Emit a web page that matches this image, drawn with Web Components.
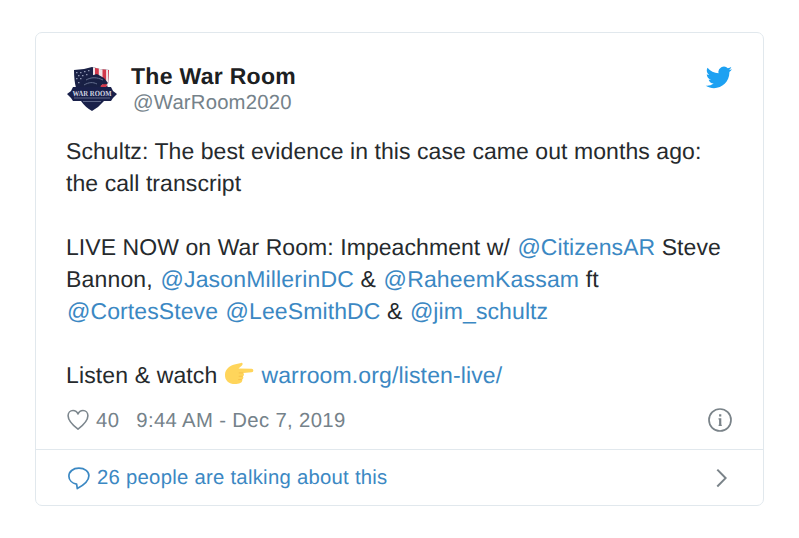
<!DOCTYPE html>
<html lang="en">
<head>
<meta charset="utf-8">
<title>The War Room on Twitter</title>
<style>
body{margin:0;background:#fff;font-family:"Liberation Sans",Arial,sans-serif;text-rendering:geometricPrecision}
</style>
</head>
<body>
<tweet-card>
  <tweet-header slot="header"><span slot="name">The War Room</span><span slot="handle">@WarRoom2020</span></tweet-header>
  <tweet-line style="letter-spacing:.07px">Schultz: The best evidence in this case came out months ago:</tweet-line>
  <tweet-line style="letter-spacing:.07px">the call transcript</tweet-line>
  <tweet-line></tweet-line>
  <tweet-line style="letter-spacing:.07px">LIVE NOW on War Room: Impeachment w/ <tweet-link>@CitizensAR</tweet-link> Steve</tweet-line>
  <tweet-line style="letter-spacing:.17px">Bannon, <tweet-link>@JasonMillerinDC</tweet-link> &amp; <tweet-link>@RaheemKassam</tweet-link> ft</tweet-line>
  <tweet-line style="letter-spacing:.1px"><tweet-link>@CortesSteve</tweet-link> <tweet-link>@LeeSmithDC</tweet-link> &amp; <tweet-link>@jim_schultz</tweet-link></tweet-line>
  <tweet-line></tweet-line>
  <tweet-line style="letter-spacing:.13px">Listen &amp; watch <tweet-icon name="point"></tweet-icon> <tweet-link>warroom.org/listen-live/</tweet-link></tweet-line>
  <tweet-meta slot="meta"><span slot="likes">40</span><span slot="date">9:44 AM - Dec 7, 2019</span></tweet-meta>
  <tweet-talk slot="footer">26 people are talking about this</tweet-talk>
</tweet-card>
<script>
const define = (name, html) => customElements.define(name, class extends HTMLElement {
  constructor() { super(); this.attachShadow({mode:'open'}).innerHTML = html; }
});

const icons = {
  bird: [28, 23, '<path fill="#1da1f2" d="M27 3.2c-1 .45-2 .7-3.1.85 1.1-.65 1.95-1.7 2.35-3-1 .6-2.15 1.05-3.4 1.3A5.4 5.4 0 0 0 13.6 7.3C9.2 7.1 5.2 5 2.5 1.7c-1.4 2.5-.7 5.6 1.7 7.2-.9 0-1.7-.25-2.45-.65 0 2.6 1.8 4.9 4.3 5.4-.8.2-1.6.25-2.4.1a5.4 5.4 0 0 0 5 3.7A10.7 10.7 0 0 1 .7 19.7C11 26.2 24.4 19 24.4 6.6v-.7c1-.75 1.9-1.7 2.6-2.7z"/>'],
  heart: [24, 24, '<path fill="none" stroke="#7c868d" stroke-width="1.6" stroke-linejoin="round" d="M12 21.2C7 17.3 2.1 13.2 2.1 7.7c0-3 2.1-5.2 4.9-5.2 2.3 0 4.1 1.3 5 3.4.9-2.1 2.7-3.4 5-3.4 2.8 0 4.9 2.2 4.9 5.2 0 5.500-4.900 9.600-9.900 13.500z"/>'],
  info: [26, 26, '<circle cx="13" cy="13" r="11" fill="none" stroke="#7a8389" stroke-width="1.7"/><path fill="#7a8389" d="M12.100 7.200h2.200v2.300h-2.200zM11.500 11.200h2.800v6.600h.5v1.200h-3.200v-1.200h.5v-5.400h-.6z"/>'],
  reply: [24, 24, '<path fill="none" stroke="#3b88c3" stroke-width="1.7" stroke-linejoin="round" d="M9.600 18.200C5 17.200 1.900 14 1.900 10.200 1.900 5.600 6 2.200 11.900 2.200s10 3.200 10 7.600c0 5.500-5.200 9.400-11.600 12.700z"/>'],
  chevron: [14, 22, '<path fill="none" stroke="#7a8389" stroke-width="2" d="M2.300 2.600l8.300 8.500-8.300 8.400"/>'],
  point: [30, 24, '<path fill="#ffd55b" d="M1 12.500C1.200 7 6 3.200 11.500 2.200L17 .9c1.700-.4 2.400 1.800.7 2.800l-3.200 2.700 13.100.3c2.200.1 2.400 3.300.1 3.500l-8.400.7c1.100 1 .8 2.700-.4 3.300.9 1.100.5 2.700-.7 3.200.5 1.500-.4 2.900-2 3.500-3.500 1.700-9.500 1.500-12.500-1.200C1.500 17.700.9 15.300 1 12.500z"/><path fill="none" stroke="#f5bd45" stroke-width=".8" d="M19 10.900h-4.200M18.500 14.300h-3.800M17.700 17.600h-3.500"/>'],
  logo: [52, 48, `<defs><clipPath id="s"><path d="M8 3q9 0 18-3 9 3 17 3l-1 14q-1 9-7 16-4 5-9 9-6-4-10-10Q8 24 8 3z"/></clipPath></defs>
   <g clip-path="url(#s)"><path fill="#1a2146" d="M0 0h52v48H0z"/><path fill="#f2e6e8" d="M27 0h20v19H27z"/><path fill="#d2394b" d="M29 0h3.800v10H29zM36.500 0h3.600v18h-3.600zM42 2h3v20h-3z"/>
   <path fill="#8e96b1" d="M10 5h1.500v1.200H10zM14 5h1.500v1.200H14zM18 4h1.500v1.200H18zM22 3h1.500v1.200H22zM12 8h1.500v1.200H12zM16 8h1.500v1.200H16zM20 7h1.500v1.200H20zM10 11h1.500v1.200H10zM14 11h1.500v1.200H14zM12 15h1.500v1.200H12z"/>
   <path fill="#182044" d="M13 22c3-8 6-12 11-13l7-2 7 4 4 5-2 2-4-1 3 4-1 3H12z"/><path fill="none" stroke="#65708f" d="M20 13c5-3 11-3 17 0M18 18c5-3 9-3 13-1"/><path fill="#d2394b" d="M35 18l6-1-1 5h-6z"/></g>
   <path fill="#19204a" d="M7 20h38l2 4 4 3-4 4-2 3h-7q-5 6-12 10-7-4-11-10H7l-2-3-4-4 4-3z"/><path stroke="#6f7898" stroke-width=".8" d="M8 31h36M17 34.500h18"/>
   <text x="26" y="28.500" text-anchor="middle" font-family="Liberation Serif,serif" font-weight="bold" font-size="7.800" textLength="39" lengthAdjust="spacingAndGlyphs" fill="#d3d6e2">WAR ROOM</text>`]
};
customElements.define('tweet-icon', class extends HTMLElement {
  connectedCallback() {
    const [w, h, body] = icons[this.getAttribute('name')];
    if (!this.shadowRoot) this.attachShadow({mode:'open'});
    this.shadowRoot.innerHTML = `<style>:host{display:inline-block;flex:none;width:${w}px;height:${h}px}svg{display:block}</style><svg width="${w}" height="${h}" viewBox="0 0 ${w} ${h}">${body}</svg>`;
  }
});
define('tweet-link', '<style>:host{color:#3b88c3;padding-left:1px}</style><slot></slot>');
define('tweet-line', '<style>:host{display:block;height:32px;line-height:32px;white-space:nowrap}::slotted(tweet-icon){vertical-align:-3px}</style><slot></slot>');
define('tweet-header', `<style>:host{display:flex;align-items:flex-start;height:70px}.who{margin:-1px auto 0 13px;display:grid;grid-template-rows:25px 27px;line-height:26px}.n{font-weight:bold;font-size:23px;line-height:24px;letter-spacing:.3px;color:#1c2022}.h{font-size:20.300px;letter-spacing:.2px;color:#75828a;margin:1px 0 0 2px}.logo{margin-top:2px}.bird{margin:1px 1px 0 0}</style>
<tweet-icon class="logo" name="logo"></tweet-icon><div class="who"><div class="n"><slot name="name"></slot></div><div class="h"><slot name="handle"></slot></div></div><tweet-icon class="bird" name="bird"></tweet-icon>`);
define('tweet-meta', `<style>:host{display:flex;align-items:center;height:26px;font-size:20.300px;letter-spacing:.36px;color:#75828a;white-space:nowrap}.l{margin:0 17px 0 6px}.d{margin-right:auto}.l,.d{padding-top:2px}.i{margin-right:1px}</style>
<tweet-icon name="heart"></tweet-icon><span class="l"><slot name="likes"></slot></span><span class="d"><slot name="date"></slot></span><tweet-icon class="i" name="info"></tweet-icon>`);
define('tweet-talk', `<style>:host{display:flex;align-items:center;height:100%;font-size:20.300px;letter-spacing:.27px;color:#3b88c3;white-space:nowrap}span{margin:0 auto 0 6px;padding-top:1px}.c{margin-right:5px}</style>
<tweet-icon name="reply"></tweet-icon><span><slot></slot></span><tweet-icon class="c" name="chevron"></tweet-icon>`);
define('tweet-card', `<style>:host{display:flex;flex-direction:column;box-sizing:border-box;width:729px;height:474px;margin:32px 0 0 35px;border:1.500px solid #e1e8ed;border-radius:7px;color:#262a2d;font-size:23px}
.main{flex:1;padding:32px 29px 0 30px}.meta{padding-top:16px}.foot{box-sizing:border-box;height:56px;border-top:1.500px solid #e1e8ed;padding:0 29px 0 31px}</style>
<div class="main"><slot name="header"></slot><slot></slot><div class="meta"><slot name="meta"></slot></div></div><div class="foot"><slot name="footer"></slot></div>`);
</script>
</body>
</html>
